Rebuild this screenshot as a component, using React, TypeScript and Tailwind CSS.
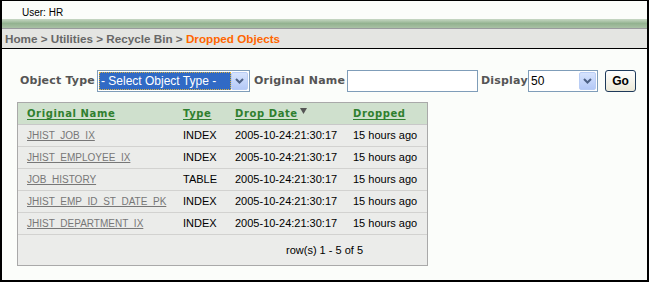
import React from "react";

const rows = [
  { name: "JHIST_JOB_IX", type: "INDEX" },
  { name: "JHIST_EMPLOYEE_IX", type: "INDEX" },
  { name: "JOB_HISTORY", type: "TABLE" },
  { name: "JHIST_EMP_ID_ST_DATE_PK", type: "INDEX" },
  { name: "JHIST_DEPARTMENT_IX", type: "INDEX" },
];

function Arrow() {
  return (
    <div className="w-[17px] h-[18px] bg-gradient-to-b from-[#d6e3fd] to-[#b4c9f7] border border-[#b9cdf5] rounded-[2px] flex items-center justify-center">
      <svg width="9" height="6" viewBox="0 0 9 6">
        <path d="M1 1 L4.5 4.5 L8 1" stroke="#4d6185" strokeWidth="2" fill="none" />
      </svg>
    </div>
  );
}

const grid = "grid grid-cols-[157px_52px_118px_82px]";
const dv = { fontFamily: '"DejaVu Sans", Verdana, sans-serif' };

export default function App() {
  return (
    <div
      className="w-[649px] h-[282px] border-t border-l-2 border-r-2 border-b-2 border-black bg-[#fbfdfa] flex flex-col overflow-hidden"
      style={{ fontFamily: '"Liberation Sans", Arial, sans-serif' }}
    >
      <div className="h-[18px] pl-[20px] pt-[6px] text-[10px] leading-[12px] text-black">User: HR</div>
      <div className="h-[9px] bg-gradient-to-b from-[#c8d8c5] via-[#93b290] to-[#a9c1a5]" />
      <div className="h-px bg-[#9a9a9e]" />
      <div className="h-[19px] bg-[#e4e5e2] pl-[3px] text-[11.7px] font-bold leading-[19px] text-[#676767] border-b border-black box-content whitespace-nowrap">
        Home &gt; Utilities &gt; Recycle Bin &gt; <span className="text-[#ff6600]">Dropped Objects</span>
      </div>

      <div className="flex items-center pl-[18px] pt-[21px] h-[43px]">
        <span className="w-[77px] whitespace-nowrap text-[11px] font-bold text-[#555555] tracking-[0.2px]" style={dv}>
          Object Type
        </span>
        <div className="w-[153px] h-[22px] border border-[#7f9db9] bg-white flex items-center pl-px pr-px">
          <div className="w-[133px] h-[18px] bg-[#316ac5] text-white text-[12px] leading-[18px] pl-[2px] outline-1 outline-dotted outline-[#d8b040] -outline-offset-1 whitespace-nowrap">
            - Select Object Type -
          </div>
          <div className="ml-auto">
            <Arrow />
          </div>
        </div>
        <span className="ml-[4px] w-[93px] whitespace-nowrap text-[11px] font-bold text-[#555555] tracking-[0.2px]" style={dv}>
          Original Name
        </span>
        <div className="w-[131px] h-[22px] border border-[#7f9db9] bg-white" />
        <span className="ml-[3px] w-[47px] whitespace-nowrap text-[11px] font-bold text-[#555555] tracking-[0.2px]" style={dv}>
          Display
        </span>
        <div className="w-[70px] h-[22px] border border-[#7f9db9] bg-white flex items-center pl-[2px] pr-px text-[12px]">
          <span>50</span>
          <div className="ml-auto">
            <Arrow />
          </div>
        </div>
        <button className="ml-[7px] w-[31px] h-[22px] border border-[#1e3a5a] rounded-[3px] bg-gradient-to-b from-white to-[#ece9d8] text-[12px] font-bold text-black leading-none">
          Go
        </button>
      </div>

      <div className="ml-[15px] mt-[10px] w-[411px] border border-[#a9a9a9] bg-[#ebecea] text-[11px] text-black">
        <div className={`${grid} h-[22px] bg-[#cfe0cd] border-b border-[#c8c8c8] items-center`}>
          {["Original Name", "Type", "Drop Date", "Dropped"].map((h) => (
            <div
              key={h}
              className={`${h === "Original Name" ? "pl-[9px]" : "pl-[8px]"} flex items-center text-[10px] font-bold text-[#2f7f2f] tracking-[0.6px]`}
              style={dv}
            >
              <span className="underline underline-offset-2">{h}</span>
              {h === "Drop Date" && (
                <svg width="7" height="7" viewBox="0 0 7 7" className="ml-[2px] -mt-[4px]">
                  <path d="M0 0 H7 L3.5 6 Z" fill="#555555" />
                </svg>
              )}
            </div>
          ))}
        </div>
        {rows.map((r) => (
          <div key={r.name} className={`${grid} h-[22px] border-b border-[#d2d2d0] items-center`}>
            <div className="pl-[9px] text-[10px] text-[#777777] underline whitespace-nowrap">{r.name}</div>
            <div className="pl-[8px]">{r.type}</div>
            <div className="pl-[8px]">2005-10-24:21:30:17</div>
            <div className="pl-[8px]">15 hours ago</div>
          </div>
        ))}
        <div className="h-[30px] flex items-center pl-[268px] text-[11px]">row(s) 1 - 5 of 5</div>
      </div>
    </div>
  );
}
